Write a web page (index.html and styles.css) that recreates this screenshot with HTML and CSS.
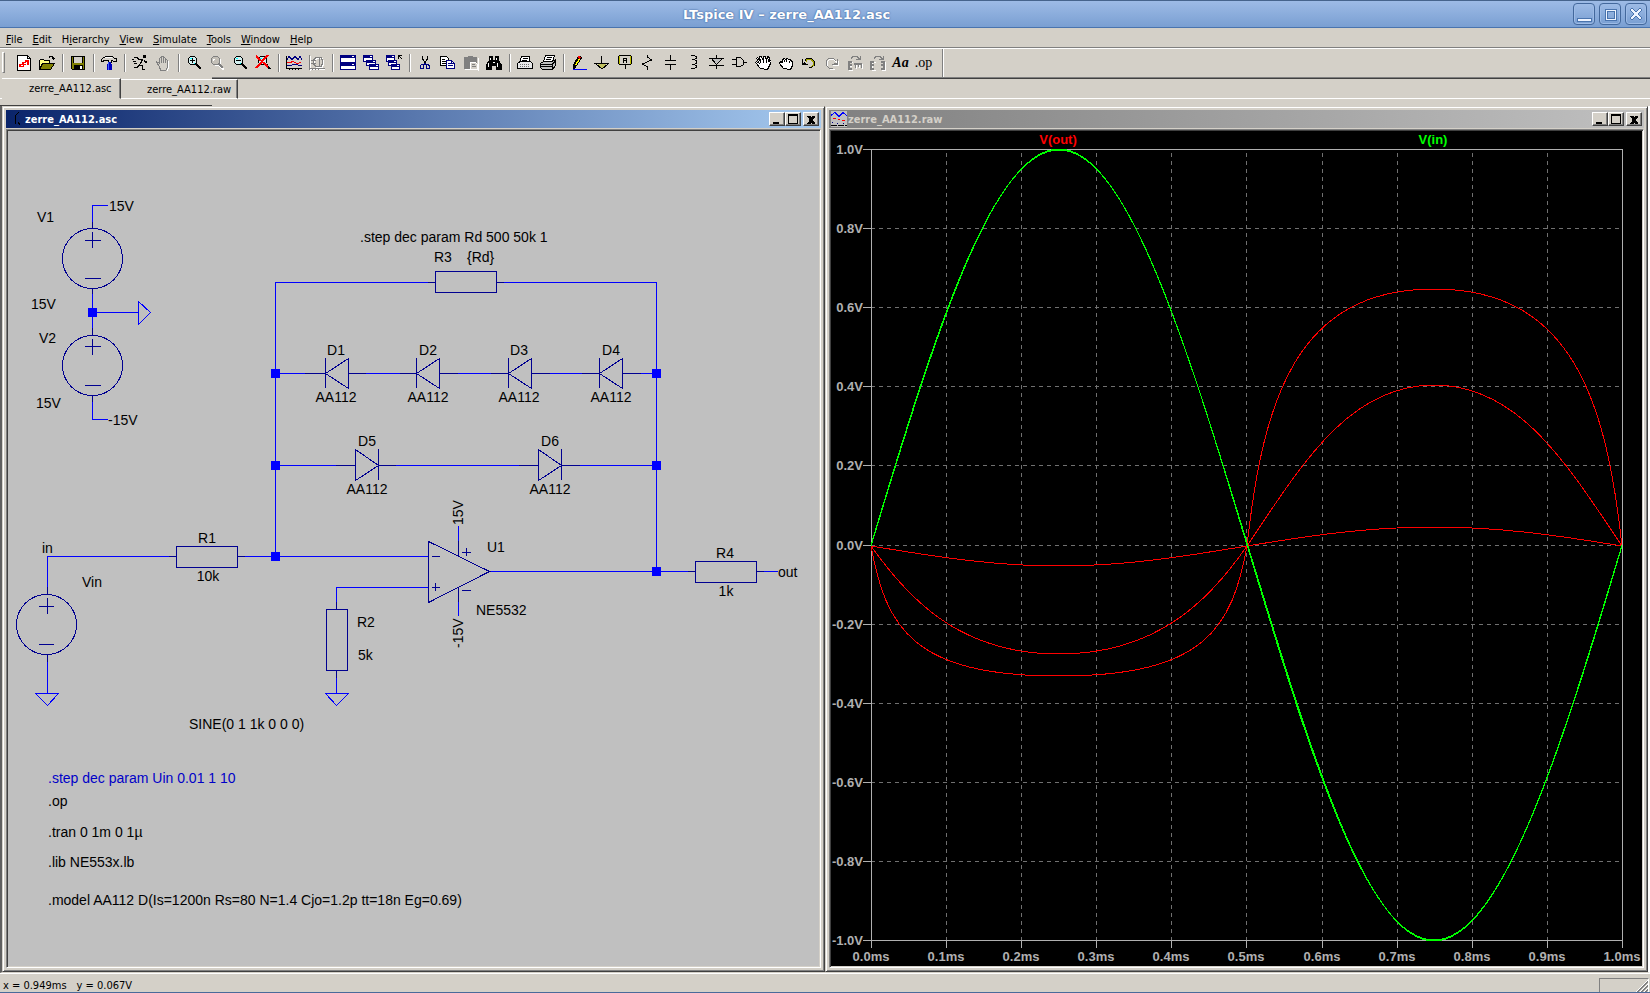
FILE: index.html
```html
<!DOCTYPE html>
<html lang="en">
<head>
    <meta charset="UTF-8">
    <meta name="viewport" content="width=device-width, initial-scale=1.0">
    <title>LTspice IV – zerre_AA112.asc</title>
    <link rel="stylesheet" href="styles.css">
</head>
<body>
    <header class="titlebar">
        <h1>LTspice IV – zerre_AA112.asc</h1>
        <div class="frame-buttons">
            <button aria-label="Minimize"><svg width="16" height="16"><path d="M1 12h14v3H1z"/></svg></button>
            <button aria-label="Maximize"><svg width="16" height="16"><path fill-rule="evenodd" d="M3 3h11v11H3zM5 5v7h7V5z"/></svg></button>
            <button aria-label="Close"><svg width="16" height="16"><path d="M2 4l2-2 4 4 4-4 2 2-4 4 4 4-2 2-4-4-4 4-2-2 4-4z"/></svg></button>
        </div>
    </header>

    <nav class="menubar">
        <button><u>F</u>ile</button>
        <button><u>E</u>dit</button>
        <button>H<u>i</u>erarchy</button>
        <button><u>V</u>iew</button>
        <button><u>S</u>imulate</button>
        <button><u>T</u>ools</button>
        <button><u>W</u>indow</button>
        <button><u>H</u>elp</button>
    </nav>

    <div class="toolbar">
        <div class="handle"></div>
        <div class="group">
            <button aria-label="New schematic"><svg class="icon"><path class="paper" d="M1.500.500h10l3 3v12h-13z"/><path class="k" d="M11.500.500v3h3"/><path class="fr" d="M4 9h2v-2h3V5h4v5h-2V7h-1v3H8v2H3v-3z"/><path class="w" d="M5 10.500h2M8 8.500h2"/></svg></button>
            <button aria-label="Open"><svg class="icon"><path class="k" d="M9.500 2.500h1v-1h3v1h1v2m-2-1h3"/><path d="M.500 14.500v-9l1-1h3l1 1h5v3h-7z" fill="#ffff80" stroke="#000"/><path d="M.500 14.500l3-6h12l-4 6z" fill="#808000" stroke="#000"/></svg></button>
        </div>
        <div class="group">
            <button aria-label="Save"><svg class="icon"><path d="M1.500 1.500h13v13h-12l-1-1z" fill="#808000" stroke="#000"/><path d="M4 2h8v6H4z" fill="#d4d0c8"/><path class="fk" d="M4 10h9v4H4zM3 2h1v6H3zM12 2h1v6h-1z"/><path d="M10 11h2v3h-2z" fill="#fff"/></svg></button>
        </div>
        <div class="group">
            <button aria-label="Control panel"><svg class="icon"><path d="M.500 6.500v-2l2-2h2v-1h7l2 2h2v3h-3l-1-1h-1v2h-3v-2h-3z" fill="#d4d0c8" stroke="#000"/><path class="w" d="M4 2.500h7"/><path d="M7 7h3v2h1v6H6V9h1z" fill="#0000c0"/><path d="M7 7h1v8H7z" fill="#4060ff"/></svg></button>
        </div>
        <div class="group">
            <button aria-label="Run"><svg class="icon"><path class="fk" d="M11 0h3v3h-3z"/><path class="k" d="M2 2.500h3l2 2h4M11 4.500l-4 6M10 5.500l-3 5M12 5.500l2 2 1-1M7 10.500h3v4m1 0h2M7 10.500l-2 2H2M0 4.500h2M1 6.500h3M2 8.500h3"/></svg></button>
            <button aria-label="Halt"><svg class="icon"><path class="wl" transform="translate(1 1)" d="M4.500 11.500l-3-4v-1l3 2v-5l1-1 1 1v-2h2v2l1-1 1 1v2l1-1 1 1v7l-2 3h-5z"/><path d="M4.500 11.500l-3-4v-1l3 2v-5l1-1 1 1v-2h2v2l1-1 1 1v2l1-1 1 1v7l-2 3h-5z" fill="#d4d0c8" stroke="#808080"/><path class="g" d="M6.500 3v5M8.500 3v5M10.500 4v4"/></svg></button>
        </div>
        <div class="group">
            <button aria-label="Zoom in"><svg class="icon"><path class="lens" d="M4.500 1.500h4l2 2v4l-2 2h-4l-2-2v-4z"/><path class="cy" d="M4 3.500h2M8 8.500h1"/><path class="k" d="M4 5.500h5M6.500 3v5"/><path class="hnd" d="M10 9l5 5"/></svg></button>
            <button aria-label="Pan"><svg class="icon"><path class="whnd" d="M11 11l4 4"/><path class="wl" d="M5.500 2.500h4l2 2v4l-2 2h-4"/><path d="M4.500 1.500h4l2 2v4l-2 2h-4l-2-2v-4z" fill="#c4c0b8" stroke="#808080"/><path class="w" d="M4 4.500h2M4.500 4v2"/><path class="ghnd" d="M10 9l4 4"/></svg></button>
            <button aria-label="Zoom out"><svg class="icon"><path class="lens" d="M4.500 1.500h4l2 2v4l-2 2h-4l-2-2v-4z"/><path class="cy" d="M4 3.500h2M8 8.500h1"/><path class="k" d="M4 5.500h5"/><path class="hnd" d="M10 9l5 5"/></svg></button>
            <button aria-label="Zoom to fit"><svg class="icon"><path class="lens" d="M5.500 1.500h4l2 2v4l-2 2h-4l-2-2v-4z"/><path class="cy" d="M5 3.500h2M8 8.500h2"/><path class="hnd" d="M11 9l4 5"/><path d="M1 1l12 11M13 0L1 13" fill="none" stroke="#f00" stroke-width="2"/></svg></button>
        </div>
        <div class="group">
            <button aria-label="Autorange"><svg class="icon"><path class="k" d="M.500 1v13M0 13.500h16M3.500 13v2M6.500 13v2M9.500 13v2M12.500 13v2"/><path class="n" d="M1 4.500l2-3 3 3 3-3 3 3 2-3 2 3M1 10.500h4l2-1h4l2 1h3"/><path d="M1 7.500h3l3-1 4 2 4-1" fill="none" stroke="#f00"/></svg></button>
            <button aria-label="Plot settings"><svg class="icon"><path class="wl" transform="translate(1 1)" d="M.500 0v15M0 13.500h16M7 2.500h5l1 2v5l-1 2H7l-3-3v-3z"/><path class="g" d="M.500 0v15M0 13.500h16M7 2.500h5l1 2v5l-1 2H7l-3-3v-3zM2 5.500h5M2 8.500h5M10.500 3v8M3.500 13v2M6.500 13v2M9.500 13v2"/></svg></button>
        </div>
        <div class="group">
            <button aria-label="Tile windows"><svg class="icon"><path class="win" d="M.500.500h15v7H.500zM.500 8.500h15v6H.500z"/><path class="fn" d="M0 0h16v3H0zM0 8h16v3H0z"/><path class="w" d="M12 1.500h2M12 9.500h2"/></svg></button>
            <button aria-label="Cascade windows"><svg class="icon"><path class="win" d="M.500 1.500h9v5H.500zM3.500 5.500h9v5h-9zM6.500 9.500h9v5h-9z"/><path class="fn" d="M0 0h10v3H0zM3 5h10v3H3zM6 9h10v3H6z"/><path class="w" d="M7 1.500h2M10 6.500h2M13 10.500h2"/></svg></button>
            <button aria-label="Close all"><svg class="icon"><path class="win" d="M.500 1.500h8v5h-8zM2.500 5.500h8v5h-8zM5.500 9.500h8v5h-8z"/><path class="fn" d="M0 0h9v3H0zM2 5h9v3H2zM5 9h9v3H5z"/><path class="w" d="M6 1.500h2M8 6.500h2M11 10.500h2"/><path class="k" d="M12.500 4V.500H16M12 0l4 4"/></svg></button>
        </div>
        <div class="group">
            <button aria-label="Cut"><svg class="icon"><path class="k" d="M5.500 1v3l3 4M10.500 1v3l-3 4"/><path class="n" d="M7.500 8v2M8.500 8v2M4.500 9.500h2v4h-3v-3zM9.500 9.500h2l1 2v2h-3z"/></svg></button>
            <button aria-label="Copy"><svg class="icon"><path class="paper" d="M.500 1.500h6l2 2v7h-8z"/><path class="k" d="M2 4.500h3M2 6.500h5M2 8.500h5"/><path d="M6.500 5.500h5l3 3v5h-8z" fill="#fff" stroke="#000080"/><path class="n" d="M8 8.500h3M8 10.500h5M11.500 5v3h3"/></svg></button>
            <button aria-label="Paste"><svg class="icon"><path d="M1 2h4V1h5v1h4v12H1z" fill="#808080"/><path class="w" d="M15.500 3v13M2 14.500h6"/><path d="M7.500 7.500h5l2 2v5h-7z" fill="#d4d0c8" stroke="#fff"/><path class="g" d="M9 9.500h3M9 11.500h4"/></svg></button>
            <button aria-label="Find"><svg class="icon"><path class="fk" d="M3 1h4v4h2V1h4v4l3 5v5h-6v-4H6v4H0v-5l3-5z"/><path class="w" d="M4.500 3v2M10.500 3v2M2.500 8v4M11.500 8v4M7 7.500h2"/></svg></button>
        </div>
        <div class="group">
            <button aria-label="Print setup"><svg class="icon"><path class="paper" d="M4.500 1.500h8v6h-10z"/><path d="M.500 13.500v-5l3-2h10l2 2v5z" fill="#e8e8e8" stroke="#000"/><path d="M3 9.500h10M3 11.500h10" stroke="#707070" stroke-dasharray="1 1"/><path class="k" d="M6 3.500h5M5 5.500h5"/></svg></button>
            <button aria-label="Print"><svg class="icon"><path class="paper" d="M5.500.500h9l-2 6h-9z"/><path class="k" d="M7 2.500h5M6 4.500h5"/><path d="M.500 8.500l3-2h9l3-2v6l-3 4H2.500l-2-2z" fill="#c0c0c0" stroke="#000"/><path class="k" d="M1 9.500h11v4M1 11.500h11M12 9.500l3-3"/></svg></button>
        </div>
        <div class="group">
            <button aria-label="Wire"><svg class="icon"><path d="M3 14H2v-4L7 1h2l2 2-6 9z" fill="#000"/><path d="M4 10l4-7 1 1-4 7z" fill="#ff0"/><path d="M7 1h2l1 2-2 1z" fill="#f00"/><path d="M2 14.500h14" stroke="#00f"/></svg></button>
            <button aria-label="Ground"><svg class="icon"><path d="M3 9h9l-4 4z" fill="#c0c060"/><path class="k" d="M7.500 1v7M0 8.500h15M2 9l6 5 6-5"/></svg></button>
            <button aria-label="Label net"><svg class="icon"><path d="M2.500.500h11l1 1v7l-1 1h-11l-1-1v-7z" fill="#d4d0c8" stroke="#000"/><path d="M2.500 1v8M13.500 1v8" fill="none" stroke="#c0c000"/><path class="k" d="M8.500 10v4M6.500 8V3.500h3V8M6 5.500h4"/></svg></button>
            <button aria-label="Resistor"><svg class="icon"><path class="k" d="M7.500 0v2l4 3-9 4 5 3v3"/></svg></button>
            <button aria-label="Capacitor"><svg class="icon"><path class="k" d="M7.500 0v6M7.500 9v6"/><path class="fk" d="M2 5h11v1H2zM2 9h11v1H2z"/></svg></button>
            <button aria-label="Inductor"><svg class="icon"><path class="k" d="M5 .500h3l2 1v2l-2 1H6M8 4.500l2 1v3l-2 1H6M8 9.500l2 1v2l-2 1H5"/></svg></button>
            <button aria-label="Diode"><svg class="icon"><path d="M2.500 3.500h11l-6 6z" fill="#c0c0c0" stroke="#000"/><path class="k" d="M7.500 0v3M7.500 10v4M0 3.500h15M0 10.500h15"/></svg></button>
            <button aria-label="Component"><svg class="icon"><path d="M4.500 2.500h4l3 3v4l-3 2h-4z" fill="#d4d0c8" stroke="#000"/><path class="k" d="M0 4.500h4M0 9.500h4M12 7.500h3"/></svg></button>
            <button aria-label="Move"><svg class="icon"><path class="paper" d="M5.500 13.500l-5-6 1-1 3 2-3-5 1-1 3 4-1-5h2l2 5V1.500h2l1 4 1-4 2 1-1 4 2-1 1 1-4 8z"/><path class="k" d="M5.500 6v2M8.500 5v3M11.500 6v2"/></svg></button>
            <button aria-label="Drag"><svg class="icon"><path class="paper" d="M5.500 13.500l-4-5 1-2 2 1v-3l2-1 1 1 2-1 1 1h2v1l2 1v4l-2 4z"/><path class="k" d="M6.500 5v2M8.500 5v2M11.500 6v2"/></svg></button>
            <button aria-label="Undo"><svg class="icon"><path class="k" d="M4 5.500l2-2h4l3 3v4l-3 2H8M1.500 4v6M2 9.500h5M2 8.500h3M3 7.500h1"/><path d="M5 6.500l1-2h4l2 2v4l-2 1" fill="none" stroke="#a0a000"/></svg></button>
            <button aria-label="Redo"><svg class="icon"><path class="wl" d="M13 8l-3-4H6L3 7v4l3 3h5M14.500 6v5M9 10.500h6"/><path class="g" d="M12 6l-3-3H5L2 6v4l3 3h4M13.500 4v6M8 9.500h5M10 8.500h3"/></svg></button>
            <button aria-label="Rotate"><svg class="icon"><path class="g" d="M4 3.500l2-2h4l3 3m0-4v4h-4"/><path class="wl" transform="translate(1 1)" d="M1.500 6v9M1 6.500h4M1 10.500h3M1 14.500h4M8 8.500h8M8.500 8v5M11.500 8v4M14.500 8v5"/><path class="gl" d="M2 6v9M2 7h3M2 10h3M2 14h3"/><path class="g" d="M7 8.500h8M7 9.500h8M8.500 8v5M11.500 8v4M14.500 8v5"/></svg></button>
            <button aria-label="Mirror"><svg class="icon"><path class="g" d="M4 3.500l2-2h4l3 3m0-4v4h-4"/><path class="wl" transform="translate(1 1)" d="M1.500 6v9M1 6.500h4M1 14.500h4M14.500 6v9M11 6.500h4M11 14.500h4"/><path class="gl" d="M1 6v9M1 7h3M1 10h3M1 14h3M14 6v9M11 7h3M11 10h3M11 14h3"/></svg></button>
            <button class="text-tool" aria-label="Text">Aa</button>
            <button class="text-tool op" aria-label="SPICE directive">.op</button>
        </div>
    </div>

    <div class="tabs">
        <button class="tab active">zerre_AA112.asc</button>
        <button class="tab">zerre_AA112.raw</button>
    </div>

    <main class="workspace">
        <section class="window">
            <div class="caption">
                <svg class="caption-icon"><path class="k" d="M11 1L7 5v6l1 2M10 11l2 3"/></svg>
                <h2>zerre_AA112.asc</h2>
                <button aria-label="Minimize"><svg width="12" height="11"><path d="M2 8h6v2H2z"/></svg></button>
                <button aria-label="Maximize"><svg width="12" height="11"><path fill-rule="evenodd" d="M1 0h10v10H1zM2 2v7h8V2z"/></svg></button>
                <button class="close" aria-label="Close"><svg width="12" height="11"><path d="M2 2h3l1 1 1-1h3v1L8 5v2l2 2v1H7L6 9l-1 1H2V9l2-2V5L2 3z"/></svg></button>
            </div>
            <div class="view">
                <svg class="schematic" viewBox="8 131 811 835" preserveAspectRatio="xMinYMin meet">
                    <!-- wires -->
                    <g class="wire">
                        <path d="M108 205.500H92.500V222M92.500 294v36M92.500 312.500h46M92.500 402v17.500H108"/>
                        <path d="M138.500 301.500v23l12-12zM35.500 693.500h23l-11 12zM325.500 693.500h23l-12 12z"/>
                        <path d="M47.500 587V556.500H169M245 556.500H428M47.500 662v31M275.500 556V282.500H428M504 282.500H656.500V571"/>
                        <path d="M275 373.500h30M366 373.500h34M458 373.500h33M550 373.500h32M641 373.500h15M275 465.500h61M396 465.500h123M580 465.500h76"/>
                        <path d="M428 587.500H336.500V602M336.500 678v15M489 571.500H688M764 571.500h14M458.500 526v15M458.500 602v14"/>
                    </g>
                    <g class="node">
                        <rect x="88" y="308" width="9" height="9"/>
                        <rect x="271" y="369" width="9" height="9"/>
                        <rect x="271" y="461" width="9" height="9"/>
                        <rect x="271" y="552" width="9" height="9"/>
                        <rect x="652" y="369" width="9" height="9"/>
                        <rect x="652" y="461" width="9" height="9"/>
                        <rect x="652" y="567" width="9" height="9"/>
                    </g>
                    <!-- symbols -->
                    <g class="symbol">
                        <circle cx="92.500" cy="258.500" r="30"/>
                        <path d="M92.500 222v6M92.500 289v5M85 240.500h16M92.500 232v16M85 278.500h16"/>
                        <circle cx="92.500" cy="365.500" r="30"/>
                        <path d="M92.500 328v7M92.500 396v6M85 346.500h16M92.500 339v16M85 385.500h16"/>
                        <circle cx="46.500" cy="624.500" r="30"/>
                        <path d="M47.500 587v7M47.500 655v7M39 606.500h15M47.500 598v16M39 644.500h15"/>
                        <path d="M428 282.500h7M497 282.500h7M435.500 271.500h61v21h-61z"/>
                        <path d="M169 556.500h7M238 556.500h7M176.500 546.500h61v21h-61z"/>
                        <path d="M336.500 602v7M336.500 671v7M326.500 609.500h21v61h-21z"/>
                        <path d="M688 571.500h7M757 571.500h7M695.500 561.500h61v21h-61z"/>
                        <path d="M305 373.500h20M349 373.500h17M325.500 358v30M348.500 358.500v30l-23-15z"/>
                        <path d="M400 373.500h16M440 373.500h18M416.500 358v30M439.500 358.500v30l-23-15z"/>
                        <path d="M491 373.500h17M532 373.500h18M508.500 358v30M531.500 358.500v30l-23-15z"/>
                        <path d="M582 373.500h17M623 373.500h18M599.500 358v30M622.500 358.500v30l-23-15z"/>
                        <path d="M336 465.500h19M379 465.500h17M378.500 449v31M355.500 449.500v31l23-15z"/>
                        <path d="M519 465.500h19M562 465.500h18M561.500 449v31M538.500 449.500v31l23-15z"/>
                        <path d="M428.500 541.500v61l61-31zM458.500 541v15M458.500 587v15M432 556.500h8M432 587.500h8M435.500 583v8M462 552.500h9M466.500 548v8M462 590.500h9"/>
                    </g>
                    <!-- labels -->
                    <g class="label">
                        <text x="37" y="222">V1</text>
                        <text x="109" y="211">15V</text>
                        <text x="31" y="309">15V</text>
                        <text x="39" y="343">V2</text>
                        <text x="36" y="408">15V</text>
                        <text x="108" y="425">-15V</text>
                        <text x="360" y="242">.step dec param Rd 500 50k 1</text>
                        <text x="434" y="262">R3</text>
                        <text x="467" y="262">{Rd}</text>
                        <text x="42" y="553">in</text>
                        <text x="82" y="587">Vin</text>
                        <text x="357" y="627">R2</text>
                        <text x="358" y="660">5k</text>
                        <text x="487" y="552">U1</text>
                        <text x="476" y="615">NE5532</text>
                        <text x="778" y="577">out</text>
                        <text x="189" y="729">SINE(0 1 1k 0 0 0)</text>
                        <text transform="translate(463 525) rotate(-90)">15V</text>
                        <text transform="translate(463 648) rotate(-90)">-15V</text>
                        <text x="48" y="783" class="directive">.step dec param Uin 0.01 1 10</text>
                        <text x="48" y="806">.op</text>
                        <text x="48" y="837">.tran 0 1m 0 1µ</text>
                        <text x="48" y="867">.lib NE553x.lb</text>
                        <text x="48" y="905">.model AA112 D(Is=1200n Rs=80 N=1.4 Cjo=1.2p tt=18n Eg=0.69)</text>
                    </g>
                    <g class="label centered">
                        <text x="336" y="355">D1</text>
                        <text x="336" y="402">AA112</text>
                        <text x="428" y="355">D2</text>
                        <text x="428" y="402">AA112</text>
                        <text x="519" y="355">D3</text>
                        <text x="519" y="402">AA112</text>
                        <text x="611" y="355">D4</text>
                        <text x="611" y="402">AA112</text>
                        <text x="367" y="446">D5</text>
                        <text x="367" y="494">AA112</text>
                        <text x="550" y="446">D6</text>
                        <text x="550" y="494">AA112</text>
                        <text x="207" y="543">R1</text>
                        <text x="208" y="581">10k</text>
                        <text x="725" y="558">R4</text>
                        <text x="726" y="596">1k</text>
                    </g>
                </svg>
            </div>
        </section>

        <section class="window inactive">
            <div class="caption">
                <svg class="caption-icon"><path d="M0 0h16v16H0z" fill="#c0c0c0"/><path d="M0 4.500l4-3 4 4 4-4 4 3" fill="none" stroke="#00f"/><path d="M2 7.500h3M7 8.500h2M11 9.500h3" stroke="#f00" stroke-width="1"/><path class="n" d="M1 11.500h1M6 12.500h1M12 12.500h1"/><path class="k" d="M0 14.500h16" stroke-dasharray="6 1"/></svg>
                <h2>zerre_AA112.raw</h2>
                <button aria-label="Minimize"><svg width="12" height="11"><path d="M2 8h6v2H2z"/></svg></button>
                <button aria-label="Maximize"><svg width="12" height="11"><path fill-rule="evenodd" d="M1 0h10v10H1zM2 2v7h8V2z"/></svg></button>
                <button class="close" aria-label="Close"><svg width="12" height="11"><path d="M2 2h3l1 1 1-1h3v1L8 5v2l2 2v1H7L6 9l-1 1H2V9l2-2V5L2 3z"/></svg></button>
            </div>
            <div class="view">
                <svg class="plot" viewBox="831 131 811 835" preserveAspectRatio="xMinYMin meet">
                    <g class="grid">
                        <path d="M946.500 153V940M1021.500 153V940M1096.500 153V940M1171.500 153V940M1246.500 153V940M1322.500 153V940M1397.500 153V940M1472.500 153V940M1547.500 153V940"/>
                        <path d="M871 228.500h751M871 307.500h751M871 386.500h751M871 465.500h751M871 545.500h751M871 624.500h751M871 703.500h751M871 782.500h751M871 861.500h751"/>
                    </g>
                    <g class="axis">
                        <path d="M863 149.500H1622.500V948M863 940.500H1622M871.500 149V948"/>
                        <path d="M863 228.500h8M863 307.500h8M863 386.500h8M863 465.500h8M863 545.500h8M863 624.500h8M863 703.500h8M863 782.500h8M863 861.500h8"/>
                        <path d="M946.500 940v8M1021.500 940v8M1096.500 940v8M1171.500 940v8M1246.500 940v8M1322.500 940v8M1397.500 940v8M1472.500 940v8M1547.500 940v8"/>
                    </g>
                    <g class="scale-y">
                        <text x="863" y="154">1.0V</text>
                        <text x="863" y="233">0.8V</text>
                        <text x="863" y="312">0.6V</text>
                        <text x="863" y="391">0.4V</text>
                        <text x="863" y="470">0.2V</text>
                        <text x="863" y="550">0.0V</text>
                        <text x="863" y="629">-0.2V</text>
                        <text x="863" y="708">-0.4V</text>
                        <text x="863" y="787">-0.6V</text>
                        <text x="863" y="866">-0.8V</text>
                        <text x="863" y="945">-1.0V</text>
                    </g>
                    <g class="scale-x">
                        <text x="871" y="961">0.0ms</text>
                        <text x="946" y="961">0.1ms</text>
                        <text x="1021" y="961">0.2ms</text>
                        <text x="1096" y="961">0.3ms</text>
                        <text x="1171" y="961">0.4ms</text>
                        <text x="1246" y="961">0.5ms</text>
                        <text x="1322" y="961">0.6ms</text>
                        <text x="1397" y="961">0.7ms</text>
                        <text x="1472" y="961">0.8ms</text>
                        <text x="1547" y="961">0.9ms</text>
                        <text x="1622" y="961">1.0ms</text>
                    </g>
                    <g class="trace-out">
                        <text x="1058" y="144">V(out)</text>
                        <path d="M871 546C932 556 991 566 1059 566S1186 556 1247 546C1308 536 1366 527 1434 527S1561 536 1622 546"/>
                        <path d="M871 546C908 598 959 654 1059 654S1211 598 1247 546C1303 462 1350 385 1434 385S1566 462 1622 546"/>
                        <path d="M871 546C886 628 913 676 1059 676S1232 628 1247 546C1263 400 1296 289 1434 289S1606 400 1622 546"/>
                    </g>
                    <g class="trace-in">
                        <text x="1433" y="144">V(in)</text>
                        <path d="M871 545C932 342 991 150 1059 150S1186 342 1247 545S1366 940 1434 940S1561 748 1622 545"/>
                        <path d="M871 546C933 342 992 149 1059 149S1186 343 1248 546S1367 941 1434 941S1562 748 1622 546"/>
                    </g>
                </svg>
            </div>
        </section>
    </main>

    <footer class="statusbar">
        <span>x = 0.949ms</span>
        <span>y = 0.067V</span>
        <div class="grip"><svg width="12" height="12"><path class="w" d="M0 12L12 0M4 12l8-8M8 12l4-4"/><path class="g" d="M1 12L12 1M2 12L12 2M5 12l7-7M6 12l6-6M9 12l3-3M10 12l2-2"/></svg></div>
    </footer>
</body>
</html>
```
FILE: styles.css
```css
* {
    box-sizing: border-box;
}
body {
    margin: 0;
    height: 100vh;
    display: flex;
    flex-direction: column;
    overflow: hidden;
    background: #d4d0c8;
    color: #000;
    font-family: "DejaVu Sans Condensed", "DejaVu Sans", sans-serif;
    font-size: 11px;
    border-bottom: 1px solid #4a6a9a;
}
button {
    margin: 0;
    padding: 0;
    border: 0;
    background: none;
    color: inherit;
    font: inherit;
}
svg {
    display: block;
    shape-rendering: crispEdges;
}

/* frame title bar */
.titlebar {
    height: 28px;
    display: flex;
    align-items: center;
    padding-right: 3px;
    background: linear-gradient(#9dbbe6, #7a9fd2);
    border-top: 1px solid #46648c;
    border-bottom: 1px solid #4a74ae;
}
.titlebar h1 {
    flex: 1;
    margin: 0;
    color: #fff;
    font-family: "DejaVu Sans", sans-serif;
    font-size: 13px;
    font-weight: bold;
    text-align: center;
    text-shadow: 0 0 2px #3f67a0, 0 0 1px #3f67a0;
}
.frame-buttons {
    display: flex;
    gap: 4px;
}
.frame-buttons button {
    width: 22px;
    height: 22px;
    padding: 2px;
    border: 1px solid #43689c;
    border-radius: 4px;
    background: linear-gradient(#9dbbe6, #7a9fd2);
    box-shadow: inset 0 0 0 1px #9dbbe6;
}
.frame-buttons path {
    fill: #eef4ff;
    stroke: #4a74ae;
    stroke-width: 1;
}

/* menu and toolbar */
.menubar {
    height: 20px;
    display: flex;
    padding: 3px 0 0 1px;
    border-bottom: 1px solid #808080;
}
.menubar button {
    padding: 0 5px;
}
.toolbar {
    height: 31px;
    display: flex;
    align-items: stretch;
    border-top: 1px solid #fff;
    padding-bottom: 2px;
    background: linear-gradient(#808080 50%, #404040 50%) 212px 100% / 100% 2px no-repeat;
}
.handle {
    width: 3px;
    margin: 3px 7px 4px 2px;
    border: 1px solid #fff;
    border-right-color: #808080;
    border-bottom-color: #808080;
}
.group {
    display: flex;
    align-items: center;
    position: relative;
    padding-right: 8px;
}
.group::after {
    content: "";
    position: absolute;
    right: 2px;
    top: 5px;
    width: 2px;
    height: 18px;
    background: linear-gradient(to right, #808080 50%, #fff 50%);
}
.group:last-child {
    padding-right: 9px;
}
.group:last-child::after {
    right: 0;
    top: 0;
    height: 28px;
}
.group button {
    width: 23px;
    height: 22px;
    display: flex;
    align-items: center;
    justify-content: center;
}
.icon {
    width: 16px;
    height: 16px;
}
.group .text-tool {
    font-family: "Liberation Serif", serif;
    font-size: 14px;
    font-style: italic;
    font-weight: bold;
}
.group .text-tool.op {
    font-style: normal;
    font-weight: normal;
}

/* icon paint */
.k, .n, .g, .gl, .w, .wl, .cy, .hnd, .ghnd, .whnd { fill: none; }
.k { stroke: #000; }
.n { stroke: #000080; }
.g, .gl { stroke: #808080; }
.gl { stroke-width: 2; }
.w, .wl { stroke: #fff; }
.cy { stroke: #0ff; }
.hnd { stroke: #000; stroke-width: 2; }
.ghnd { stroke: #808080; stroke-width: 2; }
.whnd { stroke: #fff; stroke-width: 2; }
.fk { fill: #000; }
.fn { fill: #000080; }
.fr { fill: #f00; }
.paper { fill: #fff; stroke: #000; }
.lens { fill: #d4f0f0; stroke: #000; }
.win { fill: #fff; stroke: #000080; }

/* document tabs */
.tabs {
    height: 27px;
    display: flex;
    align-items: flex-start;
    padding-left: 2px;
    background:
        linear-gradient(#fff, #fff) 0 19px / 100% 1px no-repeat,
        linear-gradient(#404040, #404040) 0 26px / 212px 1px no-repeat;
}
.tab {
    width: 117px;
    height: 20px;
    padding: 0 6px 0 26px;
    border-top: 1px solid #fff;
    border-right: 1px solid #404040;
    border-bottom: 1px solid #fff;
    box-shadow: inset -1px 0 #808080;
    text-align: left;
}
.tab.active {
    width: 119px;
    height: 21px;
    margin-top: -1px;
    padding-left: 27px;
    border-bottom-color: #d4d0c8;
}

/* document windows */
.workspace {
    flex: 1;
    min-height: 0;
    display: flex;
    border-left: 2px solid #606060;
    border-right: 2px solid #fff;
    border-bottom: 1px solid #d4d0c8;
}
.window {
    flex: 1;
    display: flex;
    flex-direction: column;
    padding: 2px;
    border: 1px solid;
    border-color: #d4d0c8 #404040 #404040 #d4d0c8;
    box-shadow: inset 1px 1px #fff, inset -1px -1px #808080;
}
.window > * {
    margin: 0 1px;
}
.caption {
    height: 18px;
    display: flex;
    align-items: center;
    margin: 1px 1px 1px;
    padding-right: 2px;
    background: linear-gradient(to right, #0a246a, #a6caf0);
    color: #fff;
}
.inactive .caption {
    background: linear-gradient(to right, #808080, #c0c0c0);
    color: #d4d0c8;
}
.caption-icon {
    width: 16px;
    height: 16px;
    margin: 0 1px 0 2px;
}
.caption h2 {
    flex: 1;
    margin: 0;
    padding-top: 1px;
    font-size: 11px;
}
.caption button {
    width: 16px;
    height: 14px;
    padding: 1px;
    background: #d4d0c8;
    border: 1px solid;
    border-color: #fff #404040 #404040 #fff;
    box-shadow: inset -1px -1px #808080;
}
.caption .close {
    margin-left: 2px;
}
.view {
    flex: 1;
    min-height: 0;
    margin-bottom: 1px;
    border: 1px solid;
    border-color: #808080 #fff #fff #808080;
    background: #c0c0c0;
    box-shadow: inset 1px 1px #404040, inset -1px -1px #d4d0c8;
    padding: 1px;
}
.inactive .view {
    background: #000;
}
.view svg {
    width: 100%;
    height: 100%;
}

/* schematic */
.wire {
    fill: none;
    stroke: #00f;
}
.node {
    fill: #00f;
}
.symbol {
    fill: none;
    stroke: #000090;
}
.label {
    font-family: "Liberation Sans", Arial, sans-serif;
    font-size: 14px;
    fill: #000;
}
.centered {
    text-anchor: middle;
}
.directive {
    fill: #0000c8;
}

/* waveform plot */
.plot {
    font-family: "Liberation Sans", Arial, sans-serif;
    font-size: 13px;
    font-weight: bold;
    fill: #b0b0b0;
}
.grid {
    stroke: #707070;
    stroke-dasharray: 4 4;
}
.axis {
    fill: none;
    stroke: #b0b0b0;
}
.scale-y {
    text-anchor: end;
}
.scale-x, .trace-out, .trace-in {
    text-anchor: middle;
}
.trace-out {
    fill: #f00;
}
.trace-in {
    fill: #0f0;
}
.trace-out path {
    fill: none;
    stroke: #f00;
}
.trace-in path {
    fill: none;
    stroke: #0f0;
}

/* status bar */
.statusbar {
    height: 19px;
    display: flex;
    align-items: center;
    gap: 10px;
    padding: 4px 1px 0 3px;
    border-top: 1px solid #fff;
}
.grip {
    width: 50px;
    height: 15px;
    margin-left: auto;
    display: flex;
    align-items: flex-end;
    justify-content: flex-end;
    border: 1px solid;
    border-color: #808080 #fff #fff #808080;
}
```
